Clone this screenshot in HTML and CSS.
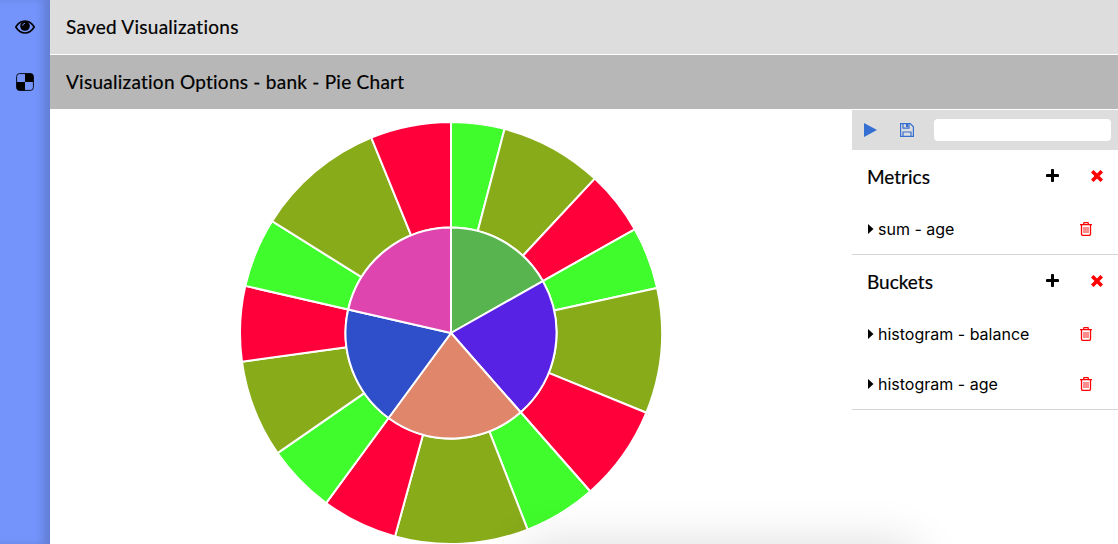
FILE: index.html
```html
<!DOCTYPE html>
<html lang="en">
<head>
<meta charset="utf-8">
<title>Visualizations</title>
<link rel="stylesheet" href="styles.css">
</head>
<body>
<svg class="defs" width="0" height="0" aria-hidden="true">
  <symbol id="trash" viewBox="0 0 12 14"><path d="M0 2.6h12M3.7 2.4V1.3q0-.7.7-.7h3.2q.7 0 .7.7v1.1M1.5 2.8v9.3q0 1.3 1.2 1.3h6.6q1.2 0 1.2-1.3V2.8" fill="none" stroke="currentColor" stroke-width="1.3"/><path d="M4 5v6M6 5v6M8 5v6" stroke="currentColor" stroke-width=".9"/></symbol>
  <symbol id="plus" viewBox="0 0 12 12"><path d="M6 1.2v9.6M1.2 6h9.6" stroke="currentColor" stroke-width="2.8" stroke-linecap="round"/></symbol>
  <symbol id="cross" viewBox="0 0 12 12"><path d="M2.500 2.500l7 7M9.500 2.500l-7 7" stroke="currentColor" stroke-width="3.600" stroke-linecap="square"/></symbol>
  <symbol id="caret" viewBox="0 0 6 10"><path d="M0 0l5.500 5L0 10z" fill="currentColor"/></symbol>
</svg>
<div class="app">
  <nav class="sidebar">
    <a class="nav-item"><svg width="20" height="14" viewBox="0 0 20 14"><path d="M.8 7Q4.400 1 10 1t9.200 6Q15.600 13 10 13T.8 7z" fill="none" stroke="#000" stroke-width="1.600"/><circle cx="10" cy="6" r="4.800"/><path d="M7.600 5.800Q7.700 3.500 10 3.300" fill="none" stroke="#7494fb" stroke-width=".9"/></svg></a>
    <a class="nav-item"><svg width="18" height="18" viewBox="0 0 18 18"><rect x=".6" y=".6" width="16.800" height="16.800" rx="3" fill="none" stroke="#000" stroke-width=".9"/><path d="M9 .6h6q2.400 0 2.400 2.400v6H9zM.6 9H9v8.400H3Q.6 17.400.6 15z"/></svg></a>
  </nav>
  <main class="main">
    <header class="bar bar-saved"><span class="title">Saved Visualizations</span></header>
    <header class="bar bar-options"><span class="title">Visualization Options - bank - Pie Chart</span></header>
    <div class="workspace">
      <section class="chart"><svg id="pie" width="424" height="424" viewBox="-212 -212 424 424"></svg></section>
      <aside class="panel">
        <div class="toolbar">
          <svg class="play" width="13" height="14" viewBox="0 0 13 14"><path d="M0 0L13 7 0 14z" fill="currentColor"/></svg>
          <svg class="save" width="14" height="14" viewBox="0 0 14 14"><path d="M.6.600h9.600l3.200 3.200v9.600H.6zM3 .6v4.500h6V.6M3 13.400V9h8v4.400" fill="none" stroke="currentColor" stroke-width="1.200"/><path d="M6 1h2v3H6z" fill="currentColor"/></svg>
          <input class="name-input" type="text" aria-label="Name">
        </div>
        <section class="group">
          <div class="group-head"><span class="group-title">Metrics</span><svg class="plus"><use href="#plus"/></svg><svg class="cross"><use href="#cross"/></svg></div>
          <div class="row"><svg class="caret"><use href="#caret"/></svg><span>sum - age</span><svg class="trash"><use href="#trash"/></svg></div>
        </section>
        <section class="group">
          <div class="group-head"><span class="group-title">Buckets</span><svg class="plus"><use href="#plus"/></svg><svg class="cross"><use href="#cross"/></svg></div>
          <div class="row"><svg class="caret"><use href="#caret"/></svg><span>histogram - balance</span><svg class="trash"><use href="#trash"/></svg></div>
          <div class="row"><svg class="caret"><use href="#caret"/></svg><span>histogram - age</span><svg class="trash"><use href="#trash"/></svg></div>
        </section>
      </aside>
    </div>
  </main>
  <div class="drawer"></div>
</div>
<script src="chart.js"></script>
</body>
</html>
```

FILE: styles.css
```css
* { box-sizing: border-box; }
body { margin: 0; background: #fff; color: #000; font-family: Inter, "Liberation Sans", sans-serif; }
svg { display: block; flex: none; }
.defs { position: absolute; }
.app { display: flex; position: relative; width: 100%; height: 544px; overflow: hidden; }
.sidebar { width: 50px; flex: none; background: #7494fb; box-shadow: inset -9px 0 9px -2px rgba(0, 0, 0, .15); }
.nav-item { display: flex; height: 55px; padding-bottom: 1px; align-items: center; justify-content: center; }
.main { flex: 1; min-width: 0; }
.bar { height: 55px; padding: 0 0 2px 16px; display: flex; align-items: center; border-bottom: 1px solid #fff; }
.bar-saved { background: #ddd; }
.bar-options { background: #b7b7b7; }
.title, .group-title { font-family: Lato, sans-serif; font-size: 19px; font-variant-ligatures: none; -webkit-text-stroke: .2px #000; white-space: nowrap; }
.title { letter-spacing: .26px; }
.workspace { display: flex; height: 434px; }
.chart { flex: 1; padding: 11px 0 0 189px; }
.panel { width: 266px; flex: none; }
.toolbar { height: 40px; display: flex; align-items: center; background: #ddd; padding: 0 7px 0 12px; color: #366fd2; }
.save { margin-left: 23px; }
.name-input { flex: 1; min-width: 0; height: 22px; margin-left: 20px; border: 0; border-radius: 4px; background: #fff; }
.group { border-bottom: 1px solid #d5d5d5; }
.group-head { height: 54px; display: flex; align-items: center; padding: 0 15px; }
.group-title { flex: 1; padding-bottom: 2px; }
.plus { width: 13px; height: 13px; margin: 0 32px 4px 0; }
.cross { width: 12px; height: 12px; color: #f00; margin-bottom: 2px; }
.row { height: 50px; display: flex; align-items: center; padding: 0 26px 0 16px; font-size: 16px; white-space: nowrap; }
.caret { width: 6px; height: 10px; margin-right: 4px; }
.trash { width: 12px; height: 14px; margin-left: auto; color: #f00; }
.drawer { position: absolute; left: 525px; top: 544px; width: 390px; height: 60px; box-shadow: 0 0 48px rgba(0, 0, 0, .14); }
```

FILE: chart.js
```js
const svg = document.getElementById('pie');
const INNER = 105.5;
const OUTER = 211;
const colors = ['#40fc2c', '#88ab19', '#ff003b'];
const ends = [14.7, 42.97, 60.55, 77.7, 112.2, 138.7, 158.7, 195.4, 216.3, 235.3, 262.2, 282.9, 302.0, 337.8, 360];
const buckets = [[60.55, '#57b44e'], [138.7, '#5822e5'], [216.3, '#df866b'], [282.9, '#2f4eca'], [360, '#df45ae']];

function point(r, deg) {
  const a = deg * Math.PI / 180;
  return (r * Math.sin(a)).toFixed(3) + ' ' + (-r * Math.cos(a)).toFixed(3);
}

function addSlice(start, end, r0, r1, fill) {
  const path = document.createElementNS('http://www.w3.org/2000/svg', 'path');
  path.setAttribute('d', `M${point(r0, start)}L${point(r1, start)}A${r1} ${r1} 0 0 1 ${point(r1, end)}L${point(r0, end)}` +
    (r0 ? `A${r0} ${r0} 0 0 0 ${point(r0, start)}` : '') + 'Z');
  path.setAttribute('fill', fill);
  path.setAttribute('stroke', '#fff');
  path.setAttribute('stroke-width', '2');
  path.setAttribute('stroke-linejoin', 'round');
  svg.appendChild(path);
}

let start = 0;
ends.forEach((end, i) => {
  addSlice(start, end, INNER, OUTER, colors[i % colors.length]);
  start = end;
});
start = 0;
buckets.forEach(([end, fill]) => {
  addSlice(start, end, 0, INNER, fill);
  start = end;
});
```
